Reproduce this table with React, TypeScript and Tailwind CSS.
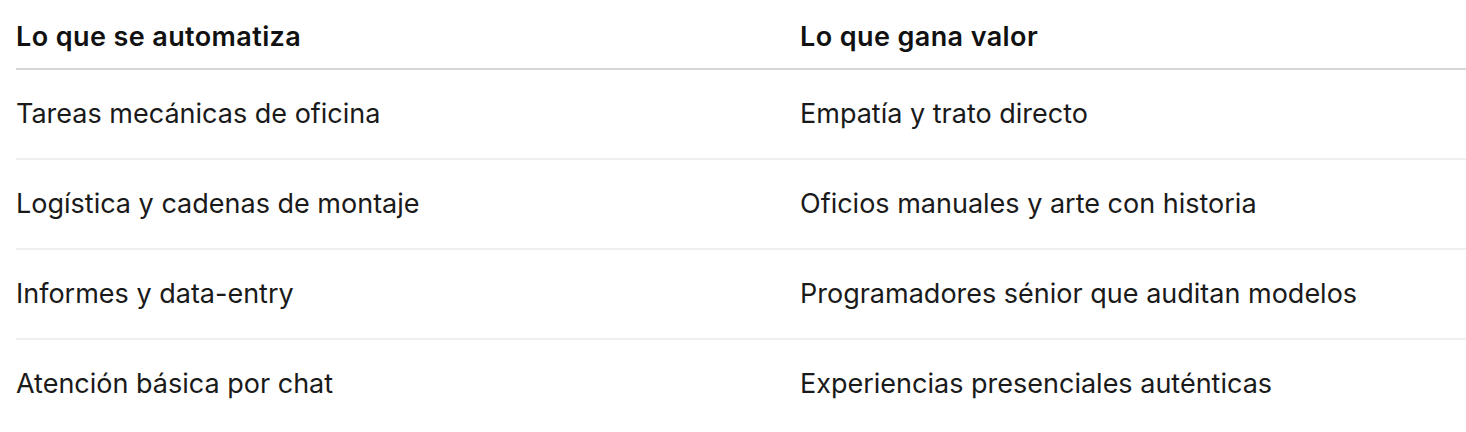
const rows = [
    ['Tareas mecánicas de oficina', 'Empatía y trato directo'],
    ['Logística y cadenas de montaje', 'Oficios manuales y arte con historia'],
    ['Informes y data-entry', 'Programadores sénior que auditan modelos'],
    ['Atención básica por chat', 'Experiencias presenciales auténticas'],
];

const App = () => {
    return (
        <div className="w-[1466px] h-[432px] bg-white pl-4 text-[#1a1a1a] font-['Inter','Noto_Sans',sans-serif] text-[27px] leading-9">
            <div className="grid grid-cols-[784px_1fr] h-[70px] border-b-2 border-[#d6d6d6] items-center pt-[6px] font-semibold tracking-[0.4px] text-[#111]">
                <div>Lo que se automatiza</div>
                <div>Lo que gana valor</div>
            </div>
            {rows.map(([a, b], i) => (
                <div
                    key={i}
                    className={
                        i < rows.length - 1
                            ? 'grid grid-cols-[784px_1fr] h-[90px] items-center border-b-2 border-[#efefef]'
                            : 'grid grid-cols-[784px_1fr] h-[88px] items-center'
                    }
                >
                    <div>{a}</div>
                    <div>{b}</div>
                </div>
            ))}
        </div>
    );
};

export default App;
